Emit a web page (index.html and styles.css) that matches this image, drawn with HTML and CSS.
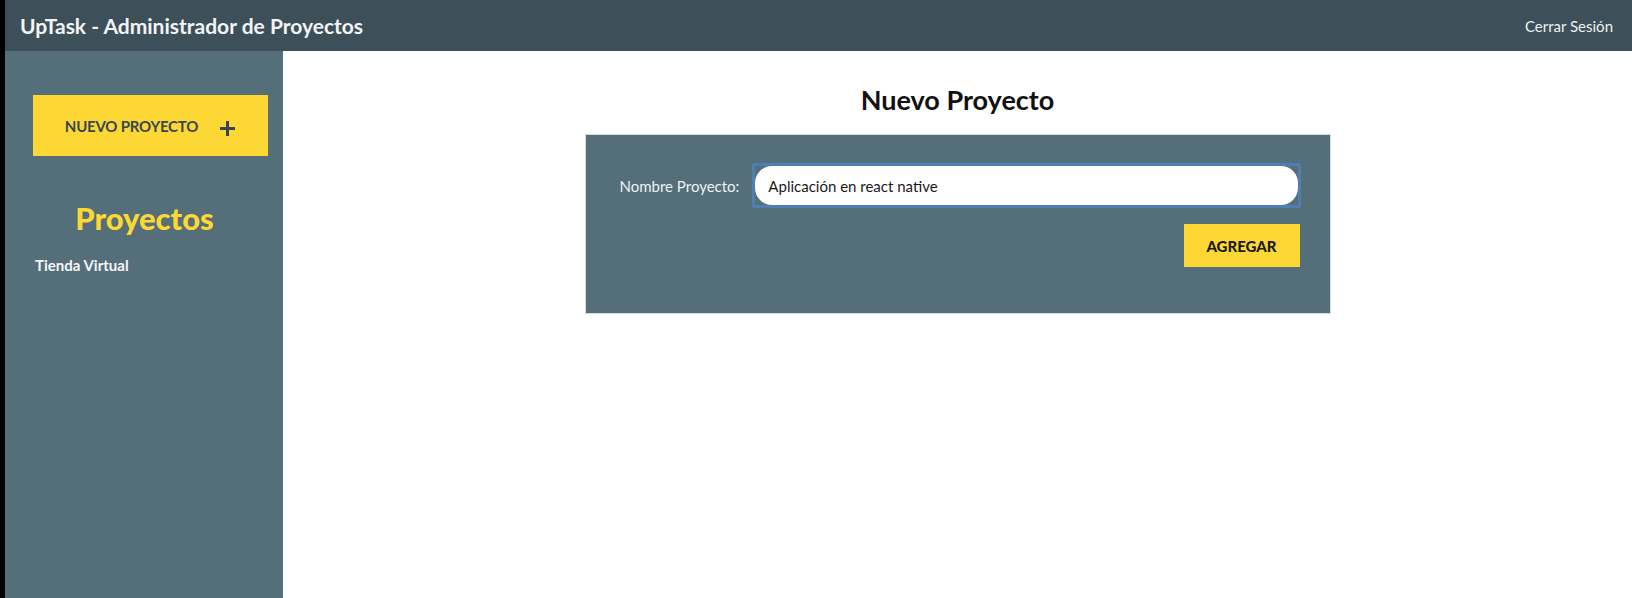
FILE: index.html
```html
<!DOCTYPE html>
<html lang="es">
<head>
<meta charset="utf-8">
<title>UpTask</title>
<link rel="stylesheet" href="styles.css">
</head>
<body>
<div class="app">
  <header class="topbar">
    <h1 class="brand">UpTask - Administrador de Proyectos</h1>
    <a class="logout" href="#">Cerrar Sesión</a>
  </header>
  <div class="layout">
    <aside class="sidebar">
      <a class="new-btn" href="#">
        <span>NUEVO PROYECTO</span>
        <svg class="plus" width="17" height="17" viewBox="0 0 17 17"><path d="M8.5 1v15M1 8.5h15" stroke="#37474f" stroke-width="3" fill="none"/></svg>
      </a>
      <h2 class="side-title">Proyectos</h2>
      <ul class="project-list">
        <li>Tienda Virtual</li>
      </ul>
    </aside>
    <main class="main">
      <h2 class="main-title">Nuevo Proyecto</h2>
      <form class="form-box">
        <div class="form-row">
          <label class="form-label">Nombre Proyecto:</label>
          <div class="input-focus">
            <input class="form-input" type="text" value="Aplicación en react native">
          </div>
        </div>
        <div class="form-actions">
          <button class="submit-btn" type="button">AGREGAR</button>
        </div>
      </form>
    </main>
  </div>
</div>
</body>
</html>
```

FILE: styles.css
```css
* { box-sizing: border-box; }

html, body {
  margin: 0;
  padding: 0;
  height: 100%;
}

body {
  background: #000;
  font-family: Lato, "Open Sans", "Liberation Sans", sans-serif;
}

.app {
  margin-left: 5px;
  height: 598px;
  background: #fff;
  display: flex;
  flex-direction: column;
}

.topbar {
  height: 51px;
  flex: 0 0 51px;
  background: #3d4f59;
  display: flex;
  align-items: center;
  justify-content: space-between;
  padding: 0 19px 0 15px;
}

.brand {
  margin: 0;
  font-size: 21px;
  font-weight: 700;
  color: #f2f4f5;
}

.logout {
  font-size: 15px;
  font-weight: 400;
  color: #eef1f2;
  text-decoration: none;
}

.layout {
  flex: 1;
  display: flex;
}

.sidebar {
  width: 278px;
  flex: 0 0 278px;
  background: #546e7a;
  padding: 44px 15px 0 28px;
}

.new-btn {
  height: 61px;
  background: #fdd835;
  display: flex;
  align-items: center;
  justify-content: center;
  gap: 21px;
  text-decoration: none;
  color: #37474f;
  font-size: 15px;
  font-weight: 700;
  letter-spacing: -0.2px;
}

.plus {
  position: relative;
  top: 3px;
}

.side-title {
  margin: 44px 0 0;
  font-size: 31px;
  line-height: 36px;
  font-weight: 900;
  color: #fdd835;
  text-align: center;
  position: relative;
  left: -6px;
}

.project-list {
  list-style: none;
  margin: 20px 0 0;
  padding: 0 0 0 2px;
}

.project-list li {
  font-size: 15px;
  line-height: 18px;
  font-weight: 700;
  color: #f4f6f7;
}

.main {
  flex: 1;
  display: flex;
  flex-direction: column;
  align-items: center;
}

.main-title {
  margin: 32px 0 0;
  font-size: 27px;
  line-height: 34px;
  font-weight: 700;
  color: #111;
}

.form-box {
  margin-top: 17px;
  width: 746px;
  background: #546e7a;
  border: 1px solid #d3dbdf;
  padding: 28px 29px 46px 34px;
}

.form-row {
  display: flex;
  align-items: center;
  gap: 13px;
}

.form-label {
  font-size: 15px;
  color: #eef2f3;
  white-space: nowrap;
}

.input-focus {
  flex: 1;
  border: 3px solid #4f7fb1;
  border-radius: 2px;
}

.form-input {
  display: block;
  width: 100%;
  height: 39px;
  border: none;
  border-radius: 17px;
  background: #fff;
  padding: 0 13px;
  font-family: Lato, "Open Sans", "Liberation Sans", sans-serif;
  font-size: 15px;
  color: #1a1a1a;
  outline: none;
}

.form-actions {
  display: flex;
  justify-content: flex-end;
  margin-top: 16px;
}

.submit-btn {
  width: 116px;
  height: 43px;
  border: none;
  background: #fdd835;
  font-family: Lato, "Open Sans", "Liberation Sans", sans-serif;
  font-size: 15px;
  font-weight: 900;
  color: #1a1a1a;
  margin-right: 1px;
}
```
